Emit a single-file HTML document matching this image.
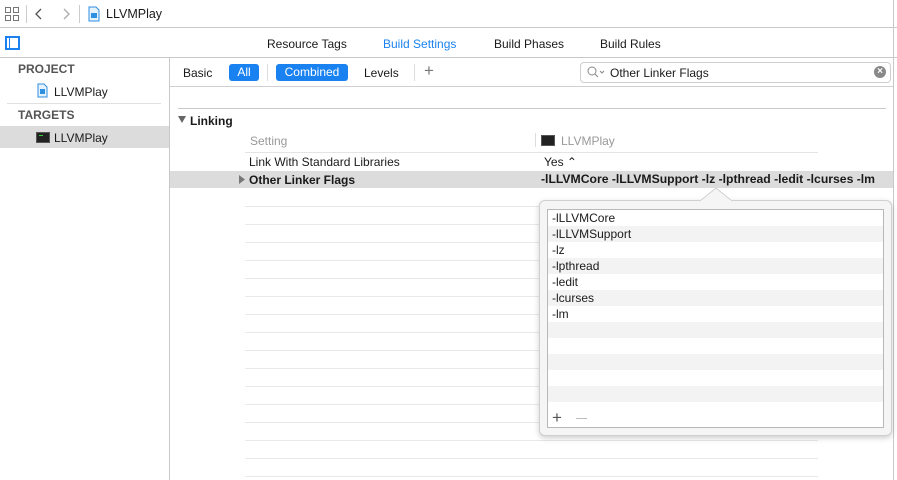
<!DOCTYPE html>
<html><head><style>
*{margin:0;padding:0;box-sizing:border-box}
body{width:897px;height:480px;overflow:hidden;background:#fff;font-family:"Liberation Sans",sans-serif;font-size:12px;color:#1a1a1a;position:relative}
.a{position:absolute}
.hl{position:absolute;height:1px;background:#d8d8d8}
</style></head><body>
<div class="a" style="left:0;top:0;width:897px;height:28px;background:#fff;border-bottom:1px solid #c8c8c8"></div>
<svg class="a" style="left:4px;top:6px" width="16" height="16"><g fill="none" stroke="#777" stroke-width="1"><rect x="1.5" y="1.5" width="5" height="5"/><rect x="9.5" y="1.5" width="5" height="5"/><rect x="1.5" y="9.5" width="5" height="5"/><rect x="9.5" y="9.5" width="5" height="5"/></g></svg>
<div class="a" style="left:26px;top:5px;width:1px;height:18px;background:#ccc"></div>
<svg class="a" style="left:34px;top:8px" width="10" height="12"><path d="M7 1L2 6l5 5" fill="none" stroke="#555" stroke-width="1.3"/></svg>
<svg class="a" style="left:62px;top:8px" width="10" height="12"><path d="M2 1l5 5-5 5" fill="none" stroke="#aaa" stroke-width="1.3"/></svg>
<div class="a" style="left:79px;top:5px;width:1px;height:18px;background:#ccc"></div>
<svg class="a" style="left:88px;top:6px" width="12" height="16"><path d="M1 1h7l3 3v11H1z" fill="#e6f2fc" stroke="#2f8fe0"/><rect x="3" y="7" width="6" height="5" fill="#2f8fe0"/></svg>
<div class="a" style="left:106px;top:7px;font-size:12.5px">LLVMPlay</div>
<div class="a" style="left:0;top:29px;width:897px;height:29px;border-bottom:1px solid #c8c8c8"></div>
<div class="a" style="left:5px;top:36px;width:15px;height:14px;border:2px solid #1a82f0"></div>
<div class="a" style="left:9px;top:38px;width:1px;height:10px;background:#1a82f0"></div>
<div class="a" style="left:267px;top:37px">Resource Tags</div>
<div class="a" style="left:383px;top:37px;color:#1a82f0">Build Settings</div>
<div class="a" style="left:494px;top:37px">Build Phases</div>
<div class="a" style="left:600px;top:37px">Build Rules</div>
<div class="a" style="left:893px;top:0;width:1px;height:480px;background:#c8c8c8"></div>
<div class="a" style="left:169px;top:58px;width:1px;height:422px;background:#c8c8c8"></div>
<div class="a" style="left:18px;top:62px;font-weight:bold;color:#555">PROJECT</div>
<svg class="a" style="left:37px;top:83px" width="11" height="15"><path d="M1 1h6l3 3v10H1z" fill="#e6f2fc" stroke="#2f8fe0"/><rect x="3" y="6" width="5" height="5" fill="#2f8fe0"/></svg>
<div class="a" style="left:54px;top:85px">LLVMPlay</div>
<div class="hl" style="left:7px;top:103px;width:154px;background:#e0e0e0"></div>
<div class="a" style="left:18px;top:108px;font-weight:bold;color:#555">TARGETS</div>
<div class="a" style="left:0;top:126px;width:169px;height:22px;background:#dcdcdc"></div>
<div class="a" style="left:36px;top:132px;width:14px;height:11px;background:#222;border:1px solid #555"></div>
<div class="a" style="left:39px;top:135px;width:4px;height:1px;background:#3c3"></div>
<div class="a" style="left:54px;top:131px">LLVMPlay</div>
<div class="a" style="left:170px;top:86px;width:723px;height:1px;background:#d0d0d0"></div>
<div class="a" style="left:183px;top:66px">Basic</div>
<div class="a" style="left:229px;top:64px;width:30px;height:17px;background:#1a82f0;border-radius:3px;color:#fff;text-align:center;line-height:17px">All</div>
<div class="a" style="left:267px;top:64px;width:1px;height:17px;background:#ddd"></div>
<div class="a" style="left:276px;top:64px;width:72px;height:17px;background:#1a82f0;border-radius:3px;color:#fff;text-align:center;line-height:17px">Combined</div>
<div class="a" style="left:364px;top:66px">Levels</div>
<div class="a" style="left:414px;top:64px;width:1px;height:17px;background:#ddd"></div>
<div class="a" style="left:424px;top:61px;font-size:17px;color:#777;font-weight:300">+</div>
<div class="a" style="left:580px;top:62px;width:311px;height:21px;border:1px solid #cfcfcf;border-radius:4px"></div>
<svg class="a" style="left:586px;top:66px" width="20" height="12"><circle cx="6" cy="5" r="4" fill="none" stroke="#888"/><path d="M9 8l3 3M14 5l2 2 2-2" fill="none" stroke="#888"/></svg>
<div class="a" style="left:610px;top:66px">Other Linker Flags</div>
<div class="a" style="left:874px;top:66px;width:12px;height:12px;border-radius:6px;background:#888;color:#fff;font-size:10px;line-height:12px;text-align:center;font-weight:bold">×</div>
<div class="hl" style="left:178px;top:108px;width:708px;background:#c8c8c8"></div>
<svg class="a" style="left:178px;top:116px" width="9" height="8"><path d="M0 0h8L4 7z" fill="#666"/></svg>
<div class="a" style="left:190px;top:114px;font-weight:bold">Linking</div>
<div class="a" style="left:250px;top:134px;color:#999">Setting</div>
<div class="a" style="left:535px;top:133px;width:1px;height:14px;background:#ddd"></div>
<div class="a" style="left:541px;top:135px;width:14px;height:11px;background:#222;border:1px solid #555"></div>
<div class="a" style="left:561px;top:134px;color:#999">LLVMPlay</div>
<div class="hl" style="left:245px;top:152px;width:573px;background:#e4e4e4"></div>
<div class="a" style="left:249px;top:155px">Link With Standard Libraries</div>
<div class="a" style="left:544px;top:155px">Yes ⌃</div>
<div class="a" style="left:170px;top:171px;width:723px;height:17px;background:#dcdcdc"></div>
<svg class="a" style="left:239px;top:175px" width="7" height="9"><path d="M0 0l6 4.5L0 9z" fill="#777"/></svg>
<div class="a" style="left:249px;top:173px;font-weight:bold">Other Linker Flags</div>
<div class="a" style="left:541px;top:172px;font-weight:bold;font-size:12.2px">-lLLVMCore -lLLVMSupport -lz -lpthread -ledit -lcurses -lm</div>
<div class="hl" style="left:245px;top:206px;width:573px;background:#e8e8e8"></div>
<div class="hl" style="left:245px;top:224px;width:573px;background:#e8e8e8"></div>
<div class="hl" style="left:245px;top:242px;width:573px;background:#e8e8e8"></div>
<div class="hl" style="left:245px;top:260px;width:573px;background:#e8e8e8"></div>
<div class="hl" style="left:245px;top:278px;width:573px;background:#e8e8e8"></div>
<div class="hl" style="left:245px;top:296px;width:573px;background:#e8e8e8"></div>
<div class="hl" style="left:245px;top:314px;width:573px;background:#e8e8e8"></div>
<div class="hl" style="left:245px;top:332px;width:573px;background:#e8e8e8"></div>
<div class="hl" style="left:245px;top:350px;width:573px;background:#e8e8e8"></div>
<div class="hl" style="left:245px;top:368px;width:573px;background:#e8e8e8"></div>
<div class="hl" style="left:245px;top:386px;width:573px;background:#e8e8e8"></div>
<div class="hl" style="left:245px;top:404px;width:573px;background:#e8e8e8"></div>
<div class="hl" style="left:245px;top:422px;width:573px;background:#e8e8e8"></div>
<div class="hl" style="left:245px;top:440px;width:573px;background:#e8e8e8"></div>
<div class="hl" style="left:245px;top:458px;width:573px;background:#e8e8e8"></div>
<div class="hl" style="left:245px;top:476px;width:573px;background:#e8e8e8"></div>
<div class="a" style="left:539px;top:200px;width:353px;height:236px;background:#f5f5f5;border:1px solid #d0d0d0;border-radius:6px;box-shadow:0 2px 6px rgba(0,0,0,.2)"></div>
<svg class="a" style="left:700px;top:188px" width="32" height="14"><path d="M0 13L16 0l16 13" fill="#f5f5f5" stroke="#d0d0d0"/><rect x="1" y="12" width="30" height="3" fill="#f5f5f5"/></svg>
<div class="a" style="left:547px;top:209px;width:337px;height:219px;background:#fff;border:1px solid #b8b8b8;overflow:hidden;line-height:14px">
<div style="height:16px;padding:1px 4px">-lLLVMCore</div>
<div style="height:16px;padding:1px 4px;background:#f3f3f3">-lLLVMSupport</div>
<div style="height:16px;padding:1px 4px">-lz</div>
<div style="height:16px;padding:1px 4px;background:#f3f3f3">-lpthread</div>
<div style="height:16px;padding:1px 4px">-ledit</div>
<div style="height:16px;padding:1px 4px;background:#f3f3f3">-lcurses</div>
<div style="height:16px;padding:1px 4px">-lm</div>
<div style="height:16px;background:#f3f3f3"></div>
<div style="height:16px"></div>
<div style="height:16px;background:#f3f3f3"></div>
<div style="height:16px"></div>
<div style="height:16px;background:#f3f3f3"></div>
</div>
<div class="a" style="left:552px;top:408px;font-size:17px;color:#555;font-weight:300">+</div>
<div class="a" style="left:576px;top:418px;width:11px;height:1px;background:#bbb"></div>
</body></html>
